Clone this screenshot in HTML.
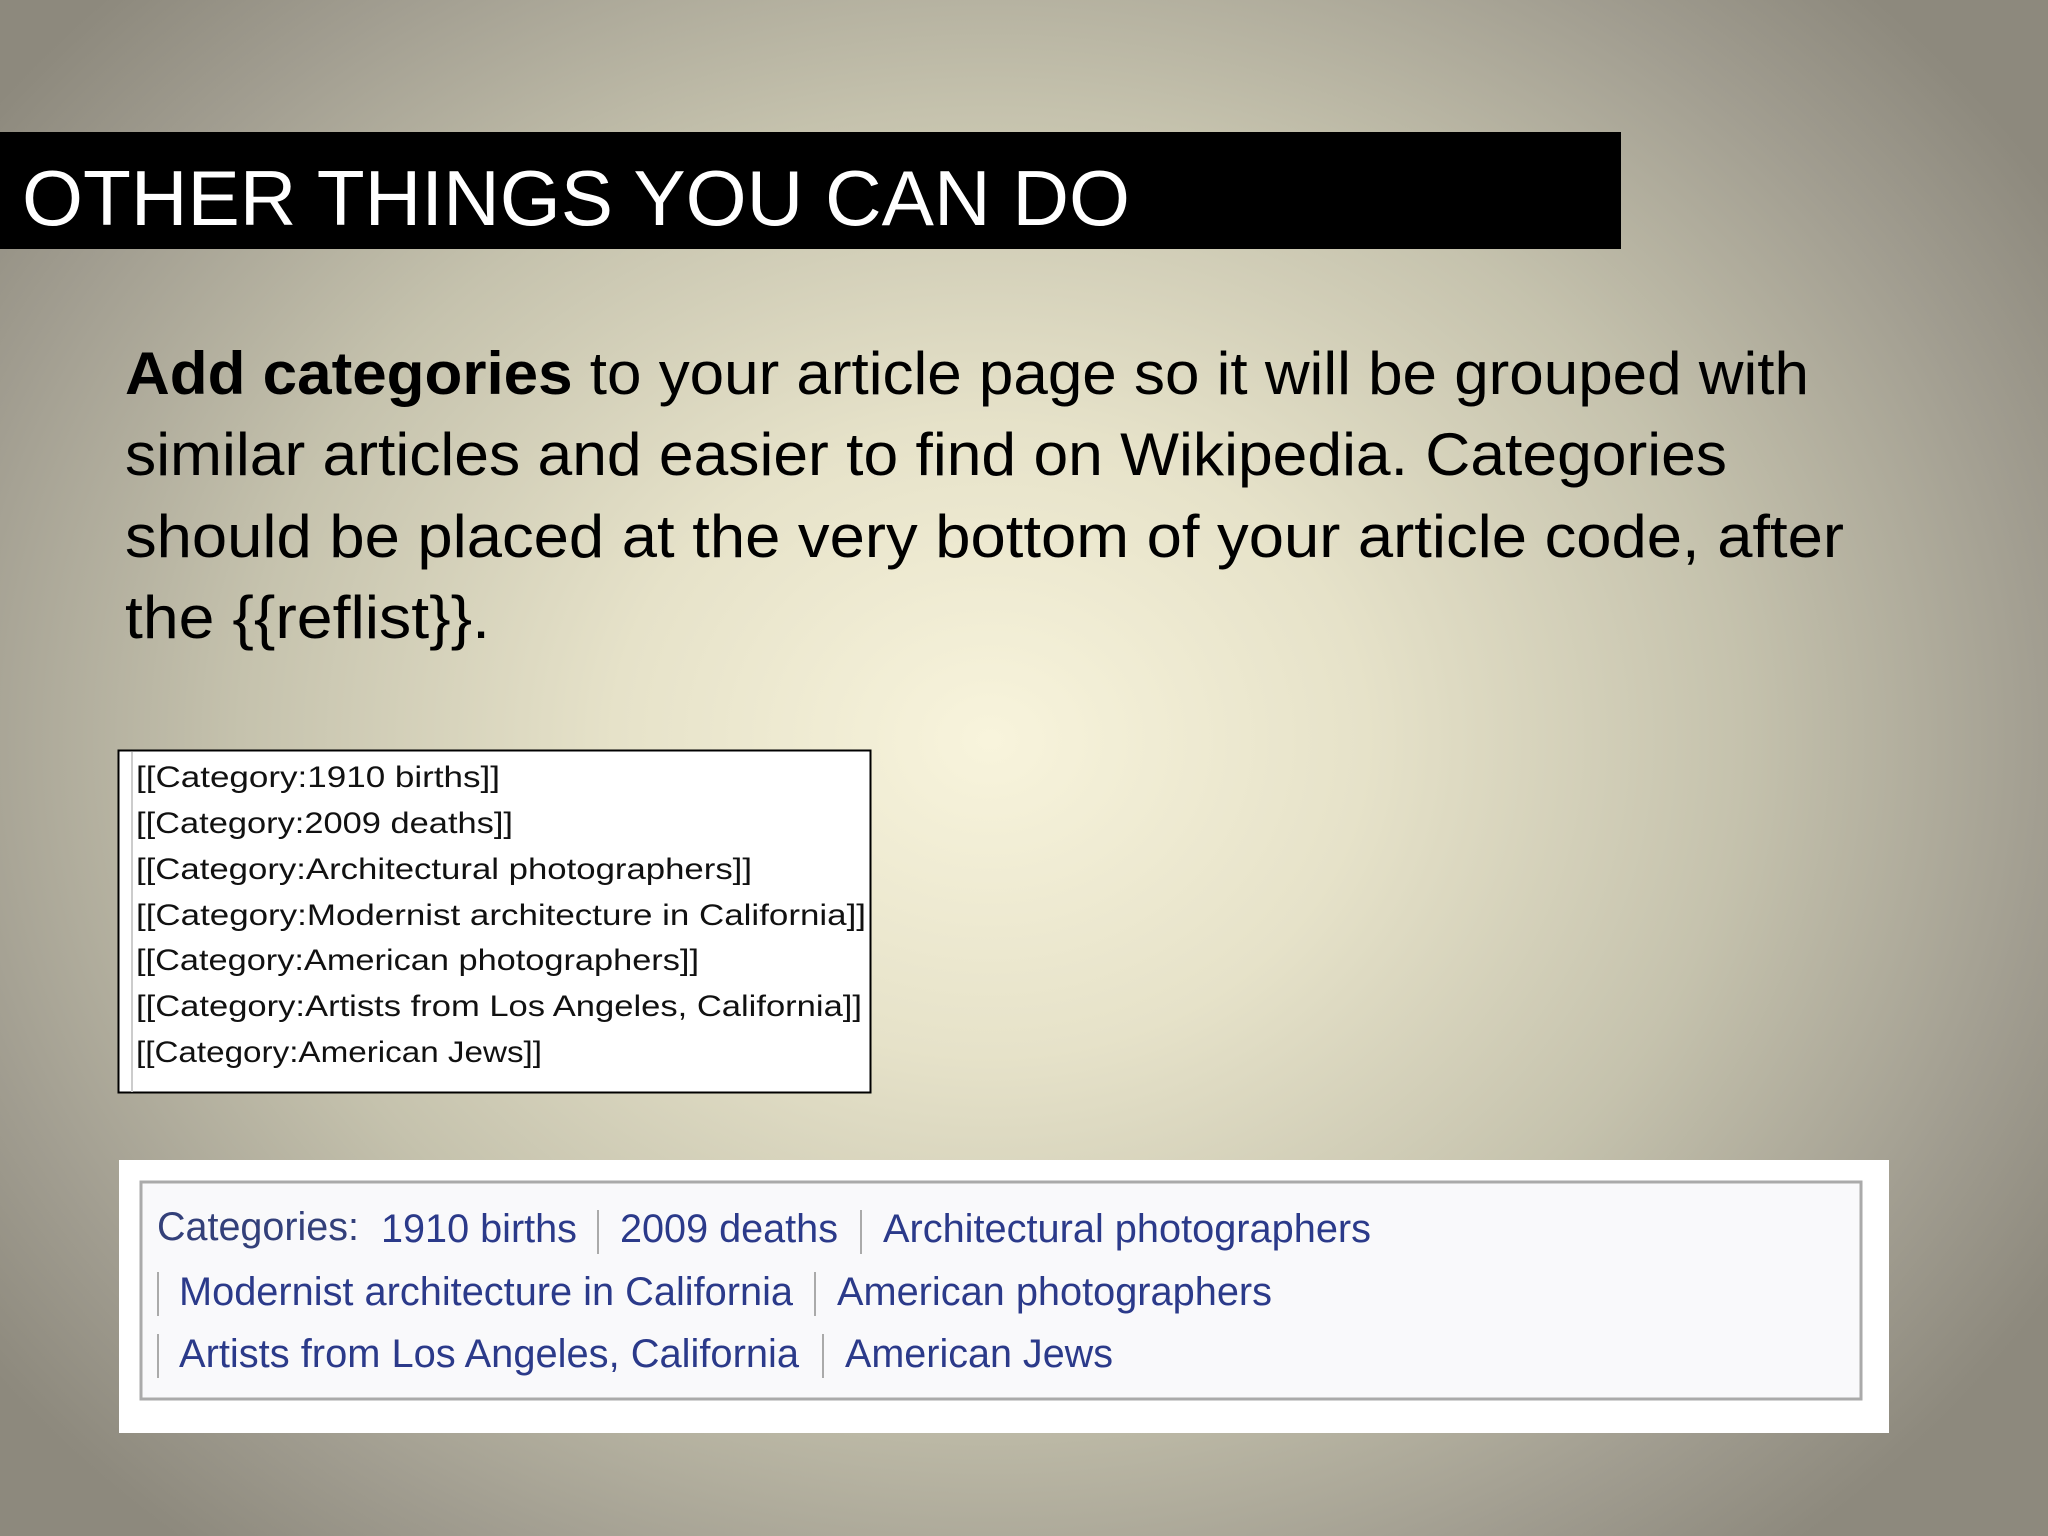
<!DOCTYPE html>
<html><head><meta charset="utf-8"><style>
html,body{margin:0;padding:0;width:2048px;height:1536px;overflow:hidden}
body{background:radial-gradient(ellipse 1250px 1050px at 990px 740px,#f8f4dc 0%,#e6e2c9 30%,#c5c2ad 60%,#a19d90 85%,#8d897d 100%)}
svg{position:absolute;left:0;top:0}
</style></head><body>
<svg width="2048" height="1536" viewBox="0 0 2048 1536" xmlns="http://www.w3.org/2000/svg">
<rect x="0" y="132" width="1621" height="117" fill="#000"/>
<text x="22" y="225" font-family="Liberation Sans, sans-serif" font-size="78" fill="#fff" textLength="1108" lengthAdjust="spacingAndGlyphs">OTHER THINGS YOU CAN DO</text>
<g font-family="Liberation Sans, sans-serif" font-size="60" fill="#000">
<text x="125" y="394" textLength="1684" lengthAdjust="spacingAndGlyphs"><tspan font-weight="bold">Add categories</tspan> to your article page so it will be grouped with</text>
<text x="125" y="475" textLength="1602" lengthAdjust="spacingAndGlyphs">similar articles and easier to find on Wikipedia. Categories</text>
<text x="125" y="557" textLength="1719" lengthAdjust="spacingAndGlyphs">should be placed at the very bottom of your article code, after</text>
<text x="125" y="638" textLength="365" lengthAdjust="spacingAndGlyphs">the {{reflist}}.</text>
</g>
<rect x="118.5" y="750.5" width="752" height="342" fill="#fff" stroke="#000" stroke-width="2"/>
<line x1="132" y1="752" x2="132" y2="1092" stroke="#ccc" stroke-width="2"/>
<g font-family="Liberation Sans, sans-serif" font-size="30" fill="#111">
<text x="136" y="787" textLength="364" lengthAdjust="spacingAndGlyphs">[[Category:1910 births]]</text>
<text x="136" y="833" textLength="377" lengthAdjust="spacingAndGlyphs">[[Category:2009 deaths]]</text>
<text x="136" y="879" textLength="616" lengthAdjust="spacingAndGlyphs">[[Category:Architectural photographers]]</text>
<text x="136" y="925" textLength="730" lengthAdjust="spacingAndGlyphs">[[Category:Modernist architecture in California]]</text>
<text x="136" y="970" textLength="563" lengthAdjust="spacingAndGlyphs">[[Category:American photographers]]</text>
<text x="136" y="1016" textLength="726" lengthAdjust="spacingAndGlyphs">[[Category:Artists from Los Angeles, California]]</text>
<text x="136" y="1062" textLength="406" lengthAdjust="spacingAndGlyphs">[[Category:American Jews]]</text>
</g>
<rect x="119" y="1160" width="1770" height="273" fill="#fff"/>
<rect x="141" y="1182" width="1720" height="217" fill="#f9f9fb" stroke="#aaa" stroke-width="3"/>
<g font-family="Liberation Sans, sans-serif" font-size="40" fill="#2b3a8a">
<text x="157" y="1240" textLength="202" lengthAdjust="spacingAndGlyphs" fill="#33407a">Categories:</text>
<text x="381" y="1242" textLength="196" lengthAdjust="spacingAndGlyphs">1910 births</text>
<text x="620" y="1242" textLength="218" lengthAdjust="spacingAndGlyphs">2009 deaths</text>
<text x="883" y="1242" textLength="488" lengthAdjust="spacingAndGlyphs">Architectural photographers</text>
<text x="179" y="1305" textLength="614" lengthAdjust="spacingAndGlyphs">Modernist architecture in California</text>
<text x="837" y="1305" textLength="435" lengthAdjust="spacingAndGlyphs">American photographers</text>
<text x="179" y="1367" textLength="620" lengthAdjust="spacingAndGlyphs">Artists from Los Angeles, California</text>
<text x="845" y="1367" textLength="268" lengthAdjust="spacingAndGlyphs">American Jews</text>
</g>
<g stroke="#aaa" stroke-width="2">
<line x1="598" y1="1210" x2="598" y2="1254"/>
<line x1="861" y1="1210" x2="861" y2="1254"/>
<line x1="158" y1="1272" x2="158" y2="1316"/>
<line x1="815" y1="1272" x2="815" y2="1316"/>
<line x1="158" y1="1334" x2="158" y2="1378"/>
<line x1="823" y1="1334" x2="823" y2="1378"/>
</g>
</svg>
</body></html>
